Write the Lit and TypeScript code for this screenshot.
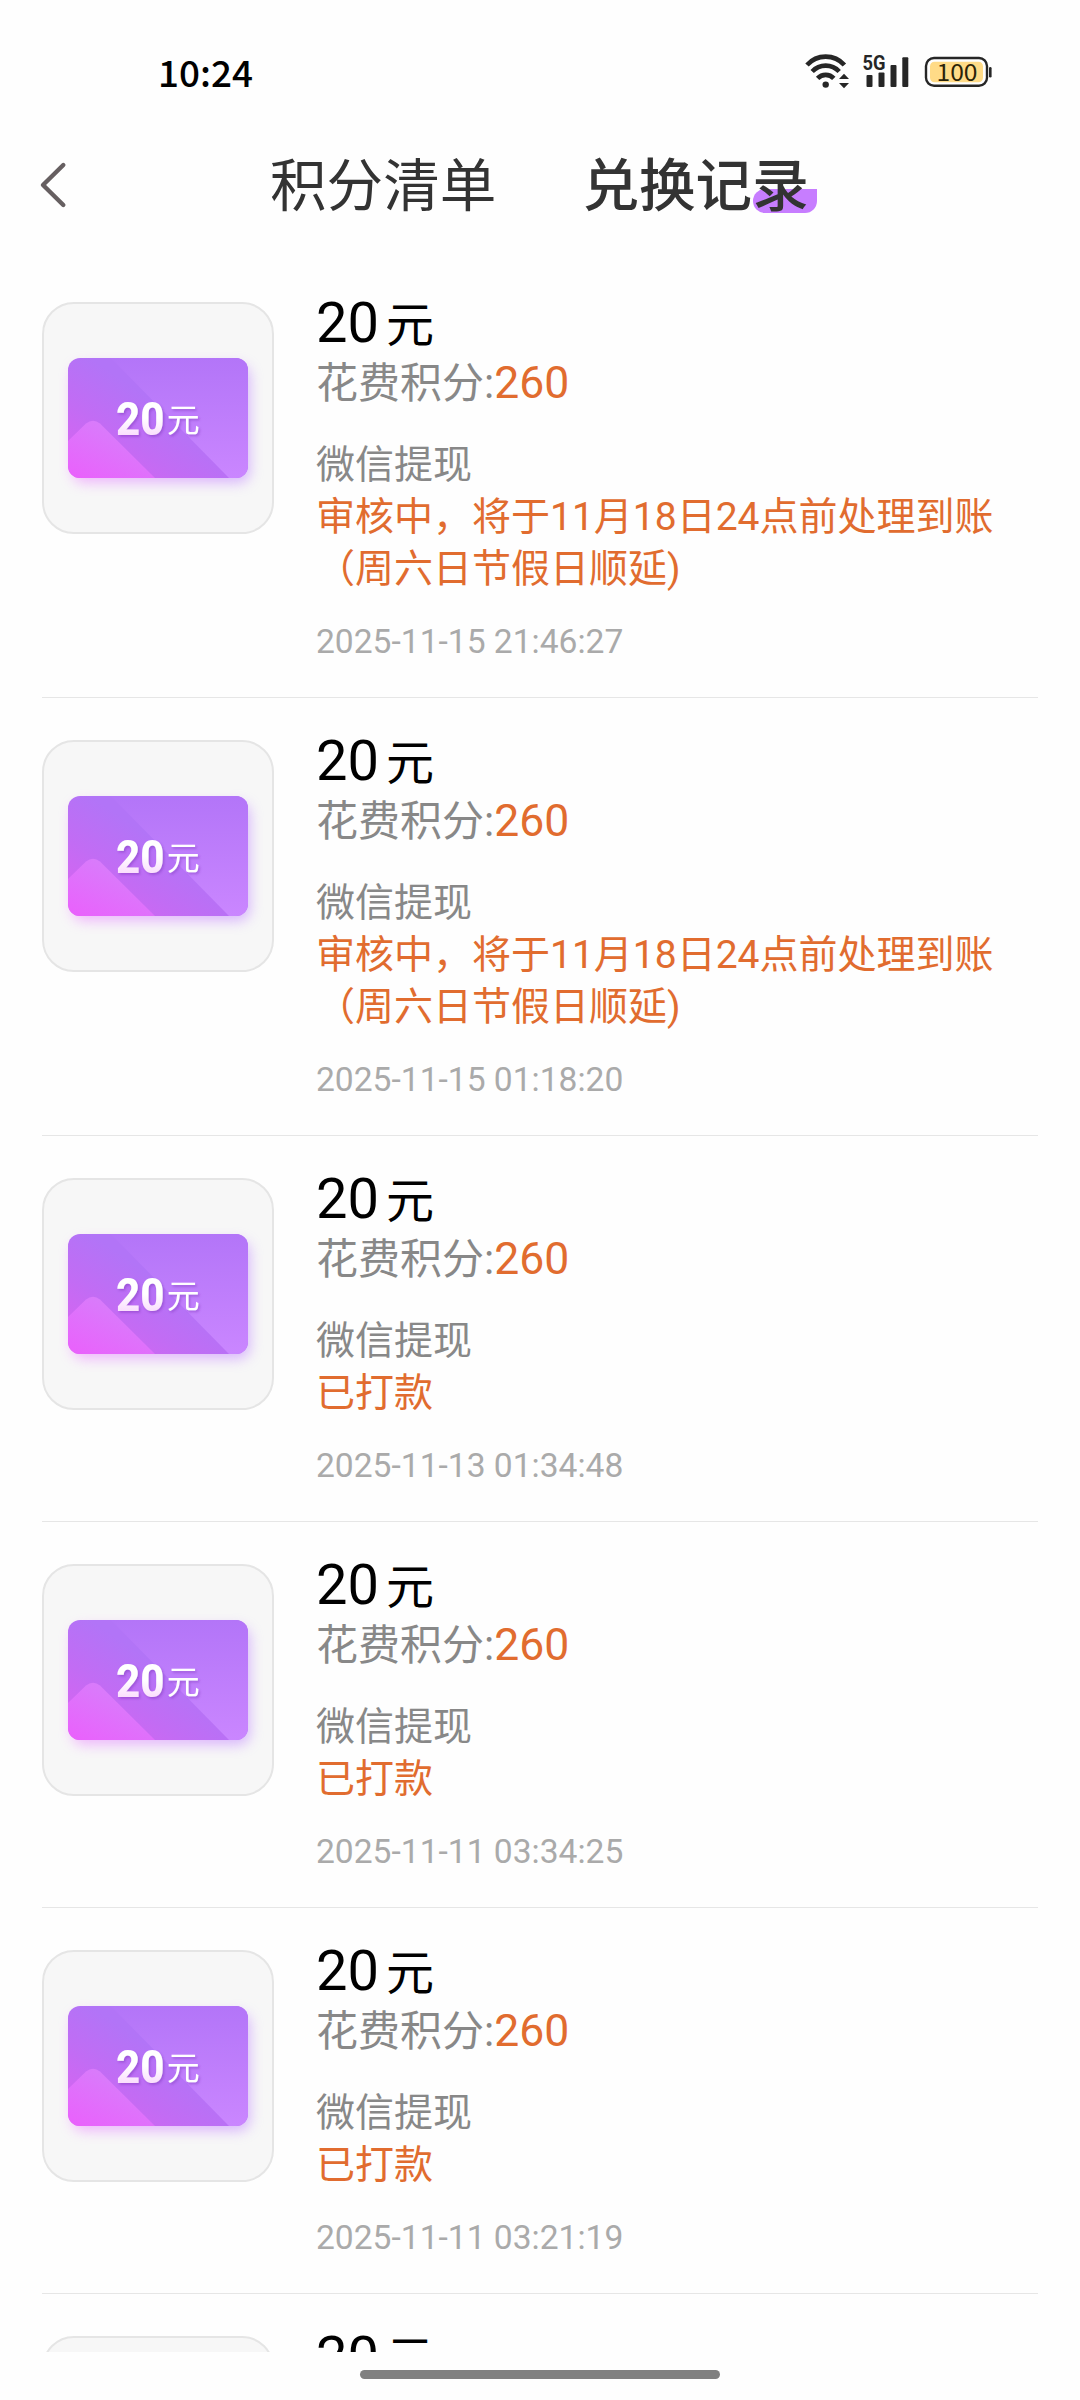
import { LitElement, html, css, nothing } from "lit";
import { customElement, property, state } from "lit/decorators.js";
import { classMap } from "lit/directives/class-map.js";

interface ExchangeRecord {
  amount: number;
  points?: number;
  channel?: string;
  status?: string;
  time?: string;
}

const PENDING = "审核中，将于11月18日24点前处理到账（周六日节假日顺延)";
const PAID = "已打款";

const make = (status: string, time: string): ExchangeRecord => ({
  amount: 20,
  points: 260,
  channel: "微信提现",
  status,
  time,
});

const RECORDS: ExchangeRecord[] = [
  make(PENDING, "2025-11-15 21:46:27"),
  make(PENDING, "2025-11-15 01:18:20"),
  make(PAID, "2025-11-13 01:34:48"),
  make(PAID, "2025-11-11 03:34:25"),
  make(PAID, "2025-11-11 03:21:19"),
  { amount: 20 },
];

@customElement("status-bar")
export class StatusBar extends LitElement {
  static styles = css`
    :host {
      display: flex;
      justify-content: space-between;
      align-items: center;
      height: 114px;
      padding: 30px 87px 0 158px;
      box-sizing: border-box;
    }
    .time {
      margin-top: -3px;
      font: 500 36.800px/56px "Noto Sans CJK SC", sans-serif;
      color: #000;
    }
    .icons {
      display: block;
      width: 188px;
      height: 40px;
    }
    .net {
      font: 700 20px "Roboto", sans-serif;
    }
    .level {
      font: 400 23px "Noto Sans CJK SC", sans-serif;
    }
  `;

  render() {
    return html`
      <span class="time">10:24</span>
      <svg class="icons" viewBox="805 52 188 40" fill="#262626">
        <g fill="none" stroke="#262626" stroke-width="4.6">
          <path d="M807 65A25 25 0 0 1 844.400 65" />
          <path d="M812.200 71.500A18.500 18.500 0 0 1 839.200 71.500" />
          <path d="M817.600 78.400A11 11 0 0 1 833.800 78.400" />
        </g>
        <circle cx="825.7" cy="84.6" r="3.2" />
        <path d="M839 79L844 73.800L849 79ZM839 83L844 88.200L849 83Z" />
        <text class="net" x="862.500" y="70" textLength="23" lengthAdjust="spacingAndGlyphs">5G</text>
        <rect x="866.500" y="75" width="6" height="12" rx="1" />
        <rect x="878.500" y="72.500" width="6" height="14.500" rx="1" />
        <rect x="890.500" y="65" width="6" height="22" rx="1" />
        <rect x="902.300" y="57.300" width="6" height="29.700" rx="1" />
        <rect x="926" y="58" width="61" height="27.800" rx="8" fill="none" stroke="#262626" stroke-width="2.400" />
        <rect x="930" y="61.700" width="53" height="20.600" rx="4.500" fill="#ffdb87" />
        <text class="level" x="957" y="80.700" text-anchor="middle" textLength="41" lengthAdjust="spacingAndGlyphs" fill="#2b2308">100</text>
        <rect x="989" y="67" width="2.600" height="10.500" rx="1.300" />
      </svg>
    `;
  }
}

@customElement("nav-tabs")
export class NavTabs extends LitElement {
  @state() private active = 1;
  private tabs = ["积分清单", "兑换记录"];

  static styles = css`
    :host {
      display: flex;
      align-items: center;
      height: 142px;
      padding-left: 38px;
      font-family: "Noto Sans CJK SC", sans-serif;
    }
    .back {
      display: block;
      width: 30px;
      height: 52px;
      margin-right: 202px;
    }
    .tabs {
      display: flex;
      gap: 86px;
      margin-top: -8px;
    }
    .tab {
      position: relative;
      z-index: 0;
      font-size: 56.600px;
      line-height: 84px;
      color: #333;
    }
    .active {
      font-weight: 500;
    }
    .active::after {
      content: "";
      position: absolute;
      z-index: -1;
      right: -8px;
      bottom: 10px;
      width: 64px;
      height: 24px;
      border-radius: 12px 0 12px 12px;
      background: #c77dff;
    }
  `;

  render() {
    return html`
      <svg class="back" viewBox="0 0 30 52" fill="none" stroke="#665f61" stroke-width="4.400" stroke-linecap="round" stroke-linejoin="round">
        <path d="M25.300 6L5 26L25.300 46" />
      </svg>
      <div class="tabs">
        ${this.tabs.map(
          (t, i) => html`<div
            class=${classMap({ tab: true, active: i === this.active })}
            @click=${() => (this.active = i)}
          >${t}</div>`
        )}
      </div>
    `;
  }
}

@customElement("cash-card")
export class CashCard extends LitElement {
  @property({ type: Number }) amount = 0;

  static styles = css`
    :host {
      display: block;
      flex: none;
      box-sizing: border-box;
      width: 232px;
      height: 232px;
      border: 2px solid #e5e5e5;
      border-radius: 32px;
      background: #f7f7f7;
    }
    .art {
      display: block;
      width: 228px;
      height: 228px;
    }
    .num {
      font: 800 47px "Roboto", sans-serif;
    }
    .unit {
      font: 400 33px "Noto Sans CJK SC", sans-serif;
    }
  `;

  render() {
    return html`
      <svg class="art" viewBox="-24 -54 228 228">
        <defs>
          <linearGradient id="base" gradientUnits="userSpaceOnUse" x1="15" y1="125" x2="75" y2="35">
            <stop offset="0" stop-color="#dc62f0" />
            <stop offset="0.55" stop-color="#c26cf4" />
            <stop offset="1" stop-color="#b274f7" />
          </linearGradient>
          <linearGradient id="side" x1="0" y1="0" x2="0" y2="1">
            <stop offset="0" stop-color="#b375f8" />
            <stop offset="1" stop-color="#ca86ff" />
          </linearGradient>
          <linearGradient id="hill" gradientUnits="userSpaceOnUse" x1="5" y1="122" x2="32" y2="66">
            <stop offset="0" stop-color="#ea60fc" />
            <stop offset="1" stop-color="#d97bfb" />
          </linearGradient>
          <linearGradient id="glow">
            <stop offset="0" stop-color="#ee8cff" />
            <stop offset="1" stop-color="#c08aff" />
          </linearGradient>
          <linearGradient id="digits" x1="0" y1="0" x2="0" y2="1">
            <stop offset="0.5" stop-color="#fff" />
            <stop offset="0.85" stop-color="#fad9fd" />
          </linearGradient>
          <filter id="blur" x="-20%" y="-25%" width="140%" height="160%">
            <feGaussianBlur stdDeviation="6.500" />
          </filter>
          <filter id="lift" x="-20%" y="-20%" width="150%" height="150%">
            <feDropShadow dx="1.500" dy="1.800" stdDeviation="1" flood-color="#7a35b8" flood-opacity="0.45" />
          </filter>
          <clipPath id="shape"><rect width="180" height="120" rx="12" /></clipPath>
        </defs>
        <rect x="4" y="7" width="178" height="118" rx="12" fill="url(#glow)" opacity="0.6" filter="url(#blur)" />
        <g clip-path="url(#shape)">
          <rect width="180" height="120" fill="url(#base)" />
          <path d="M43 0H180V120H161Z" fill="url(#side)" />
          <path d="M0 83L18 65.500Q25 60 32 65.500L87 120H0Z" fill="url(#hill)" />
        </g>
        <g filter="url(#lift)">
          <text class="num" x="48" y="76.500" textLength="48.500" lengthAdjust="spacingAndGlyphs" fill="url(#digits)">${this.amount}</text>
          <text class="unit" x="98.800" y="73.500" fill="#fff">元</text>
        </g>
      </svg>
    `;
  }
}

@customElement("record-row")
export class RecordRow extends LitElement {
  @property({ attribute: false }) record!: ExchangeRecord;

  static styles = css`
    :host {
      display: flex;
      gap: 42px;
      flex: none;
      padding: 42px 0 35px;
      border-bottom: 1px solid #e6e6e6;
      font-family: "Roboto", "Noto Sans CJK SC", sans-serif;
    }
    .info {
      flex: 1;
      min-width: 0;
    }
    .amount {
      display: flex;
      align-items: baseline;
      gap: 7px;
      height: 51px;
      line-height: 42px;
      font-size: 56px;
      color: #000;
    }
    .unit {
      font-size: 48px;
    }
    .points {
      display: flex;
      align-items: baseline;
      height: 62px;
      line-height: 60px;
      font-size: 42px;
      color: #888;
    }
    .value {
      font-size: 44.500px;
      color: #e16c2f;
    }
    .channel,
    .status {
      font-size: 39px;
      line-height: 52px;
    }
    .channel {
      margin-top: 24px;
      color: #888;
    }
    .status {
      color: #e16c2f;
    }
    .time {
      margin-top: 27px;
      font-size: 33.600px;
      line-height: 40px;
      color: #aaa;
    }
  `;

  render() {
    const r = this.record;
    return html`
      <cash-card .amount=${r.amount}></cash-card>
      <div class="info">
        <div class="amount"><span>${r.amount}</span><span class="unit">元</span></div>
        ${r.time
          ? html`<div class="points"><span>花费积分:</span><span class="value">${r.points}</span></div>
              <div class="channel">${r.channel}</div>
              <div class="status">${r.status}</div>
              <div class="time">${r.time}</div>`
          : nothing}
      </div>
    `;
  }
}

@customElement("app-root")
export class AppRoot extends LitElement {
  static styles = css`
    :host {
      display: flex;
      flex-direction: column;
      width: 1080px;
      height: 2400px;
      overflow: hidden;
      background: #fefefe;
    }
    .list {
      display: flex;
      flex-direction: column;
      height: 2096px;
      padding: 4px 42px 0;
      box-sizing: border-box;
      overflow: hidden;
    }
    .gesture {
      display: flex;
      justify-content: center;
      padding-top: 18px;
    }
    .pill {
      width: 360px;
      height: 9px;
      border-radius: 5px;
      background: #808080;
    }
  `;

  render() {
    return html`
      <status-bar></status-bar>
      <nav-tabs></nav-tabs>
      <div class="list">
        ${RECORDS.map((r) => html`<record-row .record=${r}></record-row>`)}
      </div>
      <div class="gesture"><div class="pill"></div></div>
    `;
  }
}
